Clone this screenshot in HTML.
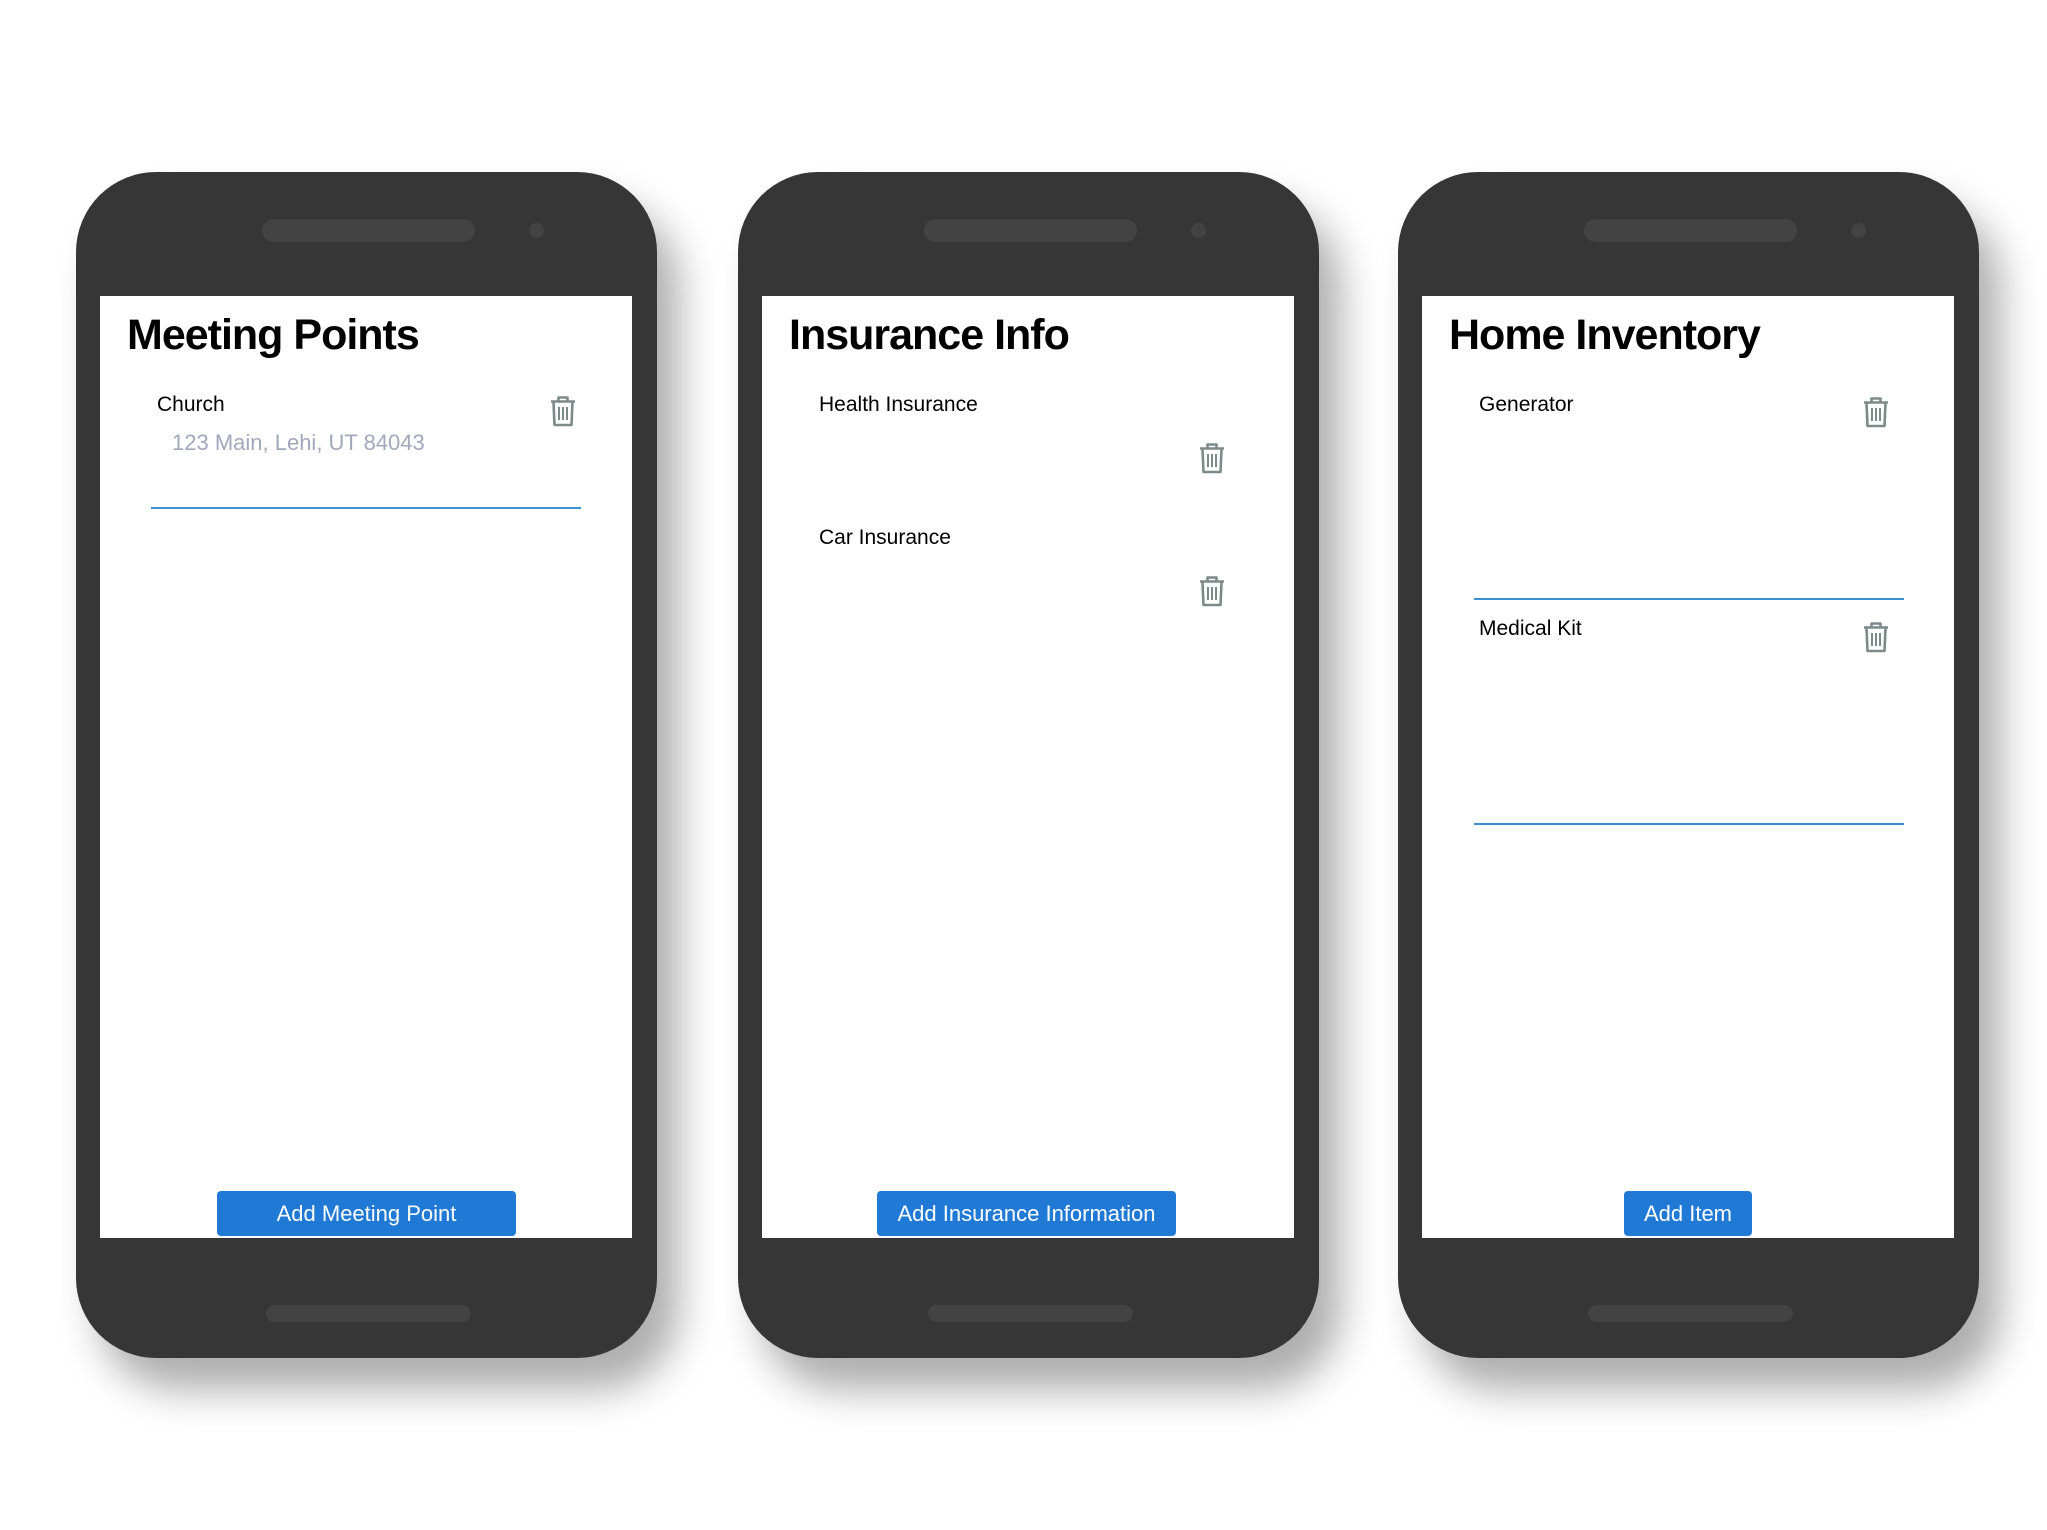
<!DOCTYPE html>
<html><head><meta charset="utf-8"><style>
body{margin:0;width:2047px;height:1530px;background:#fff;position:relative;overflow:hidden;font-family:"Liberation Sans",sans-serif}
.ph{position:absolute;top:172px;width:581px;height:1186px;background:#363636;border-radius:80px;box-shadow:22px 32px 40px rgba(0,0,0,.32)}
.sp{position:absolute;left:186px;top:47px;width:213px;height:23px;border-radius:12px;background:#434343}
.cam{position:absolute;left:453px;top:51px;width:15px;height:15px;border-radius:50%;background:#434343}
.bb{position:absolute;left:190px;top:1133px;width:205px;height:17px;border-radius:9px;background:#434343}
.sc{position:absolute;left:24px;top:124px;width:532px;height:942px;background:#fff}
.t{position:absolute;left:27px;top:15px;font-size:43px;font-weight:bold;color:#000;letter-spacing:-1px}
.it{position:absolute;font-size:21px;color:#000}
.ad{position:absolute;font-size:22px;color:#a0a8bb}
.ln{position:absolute;height:2px;background:#3b8fd4}
.tr{position:absolute;width:28px;height:32px}
.btn{position:absolute;top:895px;height:45px;background:#2079d4;border-radius:4px;color:#fff;font-size:22px;text-align:center;line-height:45px}
</style></head><body>
<svg width="0" height="0" style="position:absolute"><defs><symbol id="tr" viewBox="0 0 28 32"><g fill="none" stroke="#7d8a8a" stroke-width="2.6" stroke-linejoin="round"><path d="M2 6.5H26M9.5 6.5V2.5H18.5V6.5"/><path d="M4.5 7L5.5 30H22.5L23.5 7"/><path d="M10 12V25M14 12V25M18 12V25" stroke-width="2"/></g></symbol></defs></svg>

<div class="ph" style="left:76px"><div class="sp"></div><div class="cam"></div><div class="bb"></div>
<div class="sc">
<div class="t">Meeting Points</div>
<div class="it" style="left:57px;top:97px">Church</div>
<div class="ad" style="left:72px;top:134px">123 Main, Lehi, UT 84043</div>
<svg class="tr" style="left:449px;top:99px"><use href="#tr"/></svg>
<div class="ln" style="left:51px;top:211px;width:430px"></div>
<div class="btn" style="left:117px;width:299px">Add Meeting Point</div>
</div></div>

<div class="ph" style="left:738px"><div class="sp"></div><div class="cam"></div><div class="bb"></div>
<div class="sc">
<div class="t">Insurance Info</div>
<div class="it" style="left:57px;top:97px">Health Insurance</div>
<svg class="tr" style="left:436px;top:146px"><use href="#tr"/></svg>
<div class="it" style="left:57px;top:230px">Car Insurance</div>
<svg class="tr" style="left:436px;top:279px"><use href="#tr"/></svg>
<div class="btn" style="left:115px;width:299px">Add Insurance Information</div>
</div></div>

<div class="ph" style="left:1398px"><div class="sp"></div><div class="cam"></div><div class="bb"></div>
<div class="sc">
<div class="t">Home Inventory</div>
<div class="it" style="left:57px;top:97px">Generator</div>
<svg class="tr" style="left:440px;top:100px"><use href="#tr"/></svg>
<div class="ln" style="left:52px;top:302px;width:430px"></div>
<div class="it" style="left:57px;top:321px">Medical Kit</div>
<svg class="tr" style="left:440px;top:325px"><use href="#tr"/></svg>
<div class="ln" style="left:52px;top:527px;width:430px"></div>
<div class="btn" style="left:202px;width:128px">Add Item</div>
</div></div>
</body></html>
